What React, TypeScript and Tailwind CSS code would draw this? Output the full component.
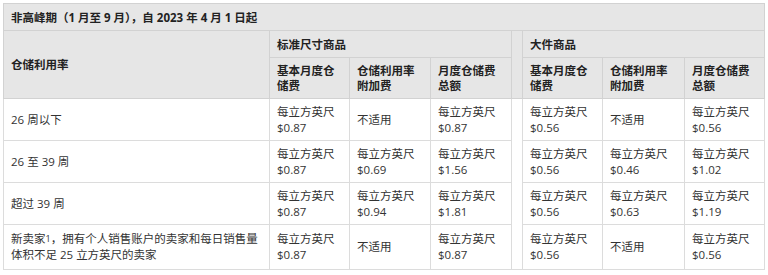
import React from "react";

const font = { fontFamily: '"Open Sans","Noto Sans CJK SC",sans-serif' };

type Cell = { a: string; b?: string };
const rows: { label: React.ReactNode; cells: Cell[]; h: string }[] = [
  {
    label: "26 周以下",
    h: "h-[42px]",
    cells: [
      { a: "每立方英尺", b: "$0.87" },
      { a: "不适用" },
      { a: "每立方英尺", b: "$0.87" },
      { a: "每立方英尺", b: "$0.56" },
      { a: "不适用" },
      { a: "每立方英尺", b: "$0.56" },
    ],
  },
  {
    label: "26 至 39 周",
    h: "h-[42px]",
    cells: [
      { a: "每立方英尺", b: "$0.87" },
      { a: "每立方英尺", b: "$0.69" },
      { a: "每立方英尺", b: "$1.56" },
      { a: "每立方英尺", b: "$0.56" },
      { a: "每立方英尺", b: "$0.46" },
      { a: "每立方英尺", b: "$1.02" },
    ],
  },
  {
    label: "超过 39 周",
    h: "h-[42px]",
    cells: [
      { a: "每立方英尺", b: "$0.87" },
      { a: "每立方英尺", b: "$0.94" },
      { a: "每立方英尺", b: "$1.81" },
      { a: "每立方英尺", b: "$0.56" },
      { a: "每立方英尺", b: "$0.63" },
      { a: "每立方英尺", b: "$1.19" },
    ],
  },
  {
    label: (
      <span className="whitespace-nowrap">
        新卖家<sup className="text-[9px] relative -top-[1px]">1</sup>，拥有个人销售账户的卖家和每日销售量
        <br />
        体积不足 25 立方英尺的卖家
      </span>
    ),
    h: "h-[45px]",
    cells: [
      { a: "每立方英尺", b: "$0.87" },
      { a: "不适用" },
      { a: "每立方英尺", b: "$0.87" },
      { a: "每立方英尺", b: "$0.56" },
      { a: "不适用" },
      { a: "每立方英尺", b: "$0.56" },
    ],
  },
];

const th = "border border-[#d2d2d2] bg-[#e6e6e6] px-[7px] text-left align-middle font-bold text-[#222] text-[11.5px] leading-[15px]";
const td = "border border-[#dcdcdc] bg-white px-[7px] text-left align-middle text-[#333] text-[11.5px] leading-[16px]";

export default function App() {
  return (
    <div className="w-[768px] h-[275px] bg-white pt-[3px] pl-[3px]" style={font}>
      <table className="table-fixed border-collapse w-[761px]">
        <colgroup>
          <col className="w-[266px]" />
          <col className="w-[80px]" />
          <col className="w-[81px]" />
          <col className="w-[81px]" />
          <col className="w-[11px]" />
          <col className="w-[80px]" />
          <col className="w-[82px]" />
          <col className="w-[80px]" />
        </colgroup>
        <thead>
          <tr className="h-[27px]">
            <th colSpan={8} className={th}>
              非高峰期（1 月至 9 月），自 2023 年 4 月 1 日起
            </th>
          </tr>
          <tr className="h-[27px]">
            <th rowSpan={2} className={th}>
              仓储利用率
            </th>
            <th colSpan={3} className={th}>
              标准尺寸商品
            </th>
            <th rowSpan={2} className={th}></th>
            <th colSpan={3} className={th}>
              大件商品
            </th>
          </tr>
          <tr className="h-[41px]">
            <th className={th}>基本月度仓<br />储费</th>
            <th className={th}>仓储利用率<br />附加费</th>
            <th className={th}>月度仓储费<br />总额</th>
            <th className={th}>基本月度仓<br />储费</th>
            <th className={th}>仓储利用率<br />附加费</th>
            <th className={th}>月度仓储费<br />总额</th>
          </tr>
        </thead>
        <tbody>
          {rows.map((r, i) => (
            <tr key={i} className={r.h}>
              <td className={td}>{r.label}</td>
              {r.cells.slice(0, 3).map((c, j) => (
                <td key={j} className={td}>
                  {c.a}
                  {c.b && <br />}
                  {c.b}
                </td>
              ))}
              {i === 0 && <td rowSpan={4} className={td + " px-0"}></td>}
              {r.cells.slice(3).map((c, j) => (
                <td key={j + 3} className={td}>
                  {c.a}
                  {c.b && <br />}
                  {c.b}
                </td>
              ))}
            </tr>
          ))}
        </tbody>
      </table>
    </div>
  );
}
